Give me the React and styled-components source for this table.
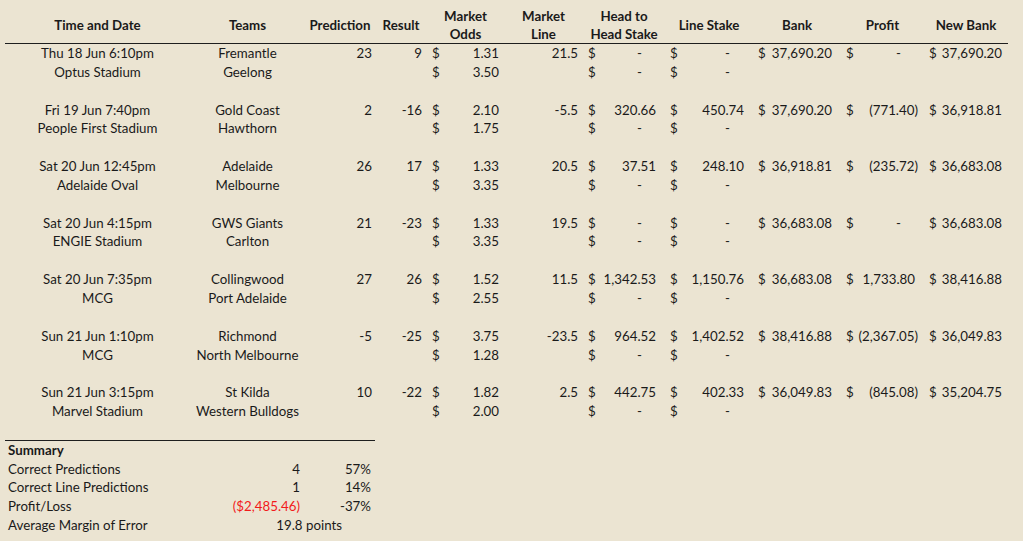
import React from 'react';
import styled, { createGlobalStyle } from 'styled-components';

const GlobalStyle = createGlobalStyle`
  html, body {
    margin: 0;
    padding: 0;
    background: #ebe4d2;
  }
  body {
    font-family: Lato, "Liberation Sans", sans-serif;
    font-size: 13.3px;
    color: #1a1a1a;
  }
`;

const COLS = '185px 115px 70px 52px 77px 79px 82px 88px 88px 83px 84px';
const SUMMARY_COLS = '185px 115px 70px';
const ROW_H = '18.85px';

const Sheet = styled.div`
  padding: 6px 0 0 5px;
  width: 1003px;
`;

const HeaderRow = styled.div`
  display: grid;
  grid-template-columns: ${COLS};
  height: 37px;
  border-bottom: 1px solid #1e1e1e;
`;

const HeadCell = styled.div`
  display: flex;
  align-items: center;
  justify-content: center;
  text-align: center;
  font-weight: 700;
  line-height: 18px;
`;

const Row = styled.div`
  display: grid;
  grid-template-columns: ${({ $cols }) => $cols || COLS};
  height: ${ROW_H};
  line-height: ${ROW_H};
  white-space: nowrap;
`;

const Text = styled.div`
  text-align: ${({ $align }) => $align || 'center'};
  padding: 0 3px;
  font-weight: ${({ $bold }) => ($bold ? 700 : 400)};
`;

const Num = styled.div`
  text-align: right;
  padding-right: ${({ $pad }) => $pad}px;
  color: ${({ $red }) => ($red ? '#f21a1a' : 'inherit')};
  grid-column: ${({ $span }) => ($span ? `span ${$span}` : 'auto')};
`;

const Money = styled.div`
  display: flex;
  justify-content: space-between;
  padding-left: 5px;
  padding-right: ${({ $pad, $neg }) => ($neg ? $pad - 3 : $pad)}px;
`;

const Dash = styled.span`
  margin-right: 14px;
`;

const Summary = styled.div`
  width: 370px;
  border-top: 1px solid #1e1e1e;
`;

const games = [
  ['Thu 18 Jun 6:10pm', 'Optus Stadium', 'Fremantle', 'Geelong', '23', '9', '1.31', '3.50', '21.5', '-', '-', '37,690.20', '-', '37,690.20'],
  ['Fri 19 Jun 7:40pm', 'People First Stadium', 'Gold Coast', 'Hawthorn', '2', '-16', '2.10', '1.75', '-5.5', '320.66', '450.74', '37,690.20', '(771.40)', '36,918.81'],
  ['Sat 20 Jun 12:45pm', 'Adelaide Oval', 'Adelaide', 'Melbourne', '26', '17', '1.33', '3.35', '20.5', '37.51', '248.10', '36,918.81', '(235.72)', '36,683.08'],
  ['Sat 20 Jun 4:15pm', 'ENGIE Stadium', 'GWS Giants', 'Carlton', '21', '-23', '1.33', '3.35', '19.5', '-', '-', '36,683.08', '-', '36,683.08'],
  ['Sat 20 Jun 7:35pm', 'MCG', 'Collingwood', 'Port Adelaide', '27', '26', '1.52', '2.55', '11.5', '1,342.53', '1,150.76', '36,683.08', '1,733.80', '38,416.88'],
  ['Sun 21 Jun 1:10pm', 'MCG', 'Richmond', 'North Melbourne', '-5', '-25', '3.75', '1.28', '-23.5', '964.52', '1,402.52', '38,416.88', '(2,367.05)', '36,049.83'],
  ['Sun 21 Jun 3:15pm', 'Marvel Stadium', 'St Kilda', 'Western Bulldogs', '10', '-22', '1.82', '2.00', '2.5', '442.75', '402.33', '36,049.83', '(845.08)', '35,204.75'],
];

const headers = ['Time and Date', 'Teams', 'Prediction', 'Result', 'Market\nOdds', 'Market\nLine', 'Head to\nHead Stake', 'Line Stake', 'Bank', 'Profit', 'New Bank'];

const Cash = ({ value, pad }) => {
  const neg = value.startsWith('(');
  return (
    <Money $pad={pad} $neg={neg}>
      <span>$</span>
      {value === '-' ? <Dash>-</Dash> : <span>{value}</span>}
    </Money>
  );
};

const Game = ({ g }) => {
  const [time, venue, home, away, pred, result, odds1, odds2, line, h2h, lineStake, bank, profit, newBank] = g;
  return (
    <>
      <Row>
        <Text>{time}</Text>
        <Text>{home}</Text>
        <Num $pad={3}>{pred}</Num>
        <Num $pad={5}>{result}</Num>
        <Cash value={odds1} pad={5} />
        <Num $pad={5}>{line}</Num>
        <Cash value={h2h} pad={9} />
        <Cash value={lineStake} pad={9} />
        <Cash value={bank} pad={9} />
        <Cash value={profit} pad={9} />
        <Cash value={newBank} pad={6} />
      </Row>
      <Row>
        <Text>{venue}</Text>
        <Text>{away}</Text>
        <div />
        <div />
        <Cash value={odds2} pad={5} />
        <div />
        <Cash value="-" pad={9} />
        <Cash value="-" pad={9} />
      </Row>
      <Row />
    </>
  );
};

export default function App() {
  return (
    <>
      <GlobalStyle />
      <Sheet>
        <HeaderRow>
          {headers.map((h) => (
            <HeadCell key={h}>
              <div>
                {h.split('\n').map((line) => (
                  <div key={line}>{line}</div>
                ))}
              </div>
            </HeadCell>
          ))}
        </HeaderRow>
        {games.map((g) => (
          <Game key={g[0]} g={g} />
        ))}
        <Summary>
          <Row $cols={SUMMARY_COLS}>
            <Text $align="left" $bold>Summary</Text>
          </Row>
          <Row $cols={SUMMARY_COLS}>
            <Text $align="left">Correct Predictions</Text>
            <Num $pad={5}>4</Num>
            <Num $pad={4}>57%</Num>
          </Row>
          <Row $cols={SUMMARY_COLS}>
            <Text $align="left">Correct Line Predictions</Text>
            <Num $pad={5}>1</Num>
            <Num $pad={4}>14%</Num>
          </Row>
          <Row $cols={SUMMARY_COLS}>
            <Text $align="left">Profit/Loss</Text>
            <Num $pad={5} $red>($2,485.46)</Num>
            <Num $pad={4}>-37%</Num>
          </Row>
          <Row $cols={SUMMARY_COLS}>
            <Text $align="left">Average Margin of Error</Text>
            <Num $pad={33} $span={2}>19.8 points</Num>
          </Row>
        </Summary>
      </Sheet>
    </>
  );
}
